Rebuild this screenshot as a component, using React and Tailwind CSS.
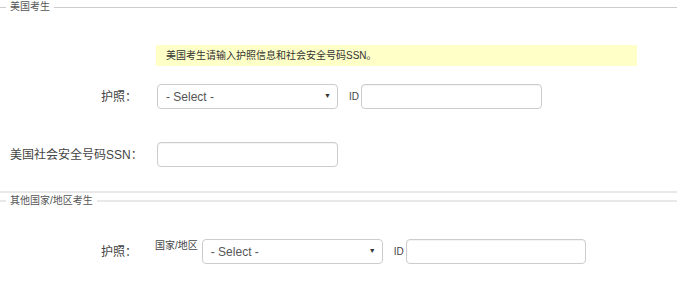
import React from "react";

const cjk = "font-['Liberation_Sans','Noto_Sans_CJK_SC',sans-serif]";

const Legend = ({ title, line }) => (
  <div className="flex items-center h-[14px]">
    <div className={`w-[6px] ${line}`}></div>
    <span className="px-[4px] text-[10px] leading-[14px] text-[#555]">{title}</span>
    <div className={`flex-1 ${line}`}></div>
  </div>
);

const Select = () => (
  <div className="flex items-center justify-between w-[181px] h-[25px] border border-[#ccc] rounded-[4px] bg-white pl-[8px] pr-[6px]">
    <span className="text-[12px] text-[#555]">- Select -</span>
    <span className="text-[7px] text-[#333]">▼</span>
  </div>
);

const Input = ({ w }) => (
  <div
    className={`${w} h-[25px] border border-[#ccc] rounded-[4px] bg-white shadow-[inset_0_1px_1px_rgba(0,0,0,0.05)]`}
  ></div>
);

const Label = ({ children }) => (
  <div className="w-[139px] text-right text-[12px] text-[#444] pr-[2px]">{children}</div>
);

export default function App() {
  return (
    <div className={`w-[677px] h-[292px] bg-white overflow-hidden ${cjk}`}>
      <Legend title="美国考生" line="h-px bg-[#ccc]" />

      <div className="ml-[156px] mt-[31px] w-[481px] h-[21px] bg-[#ffffc8] flex items-center pl-[10px] text-[10px] text-[#333]">
        美国考生请输入护照信息和社会安全号码SSN。
      </div>

      <div className="mt-[18px] flex items-center h-[25px]">
        <Label>护照：</Label>
        <div className="ml-[18px] flex items-center">
          <Select />
          <span className="ml-[11px] text-[10px] text-[#444]">ID</span>
          <div className="ml-[2px]">
            <Input w="w-[181px]" />
          </div>
        </div>
      </div>

      <div className="mt-[33px] flex items-center h-[25px]">
        <div className="w-[141px] pl-[10px] text-[12px] text-[#444] whitespace-nowrap">美国社会安全号码SSN：</div>
        <div className="ml-[16px]">
          <Input w="w-[181px]" />
        </div>
      </div>

      <div className="mt-[24px] h-[2px] bg-[#e8e8e8]"></div>

      <div className="mt-[1px]">
        <Legend title="其他国家/地区考生" line="h-[2px] bg-[#e8e8e8]" />
      </div>

      <div className="mt-[31px] flex items-center h-[25px]">
        <Label>护照：</Label>
        <div className="ml-[16px] flex items-center">
          <span className="text-[10px] text-[#444] self-start leading-[14px] mr-[4px]">国家/地区</span>
          <Select />
          <span className="ml-[11px] text-[10px] text-[#444]">ID</span>
          <div className="ml-[2px]">
            <Input w="w-[180px]" />
          </div>
        </div>
      </div>
    </div>
  );
}
